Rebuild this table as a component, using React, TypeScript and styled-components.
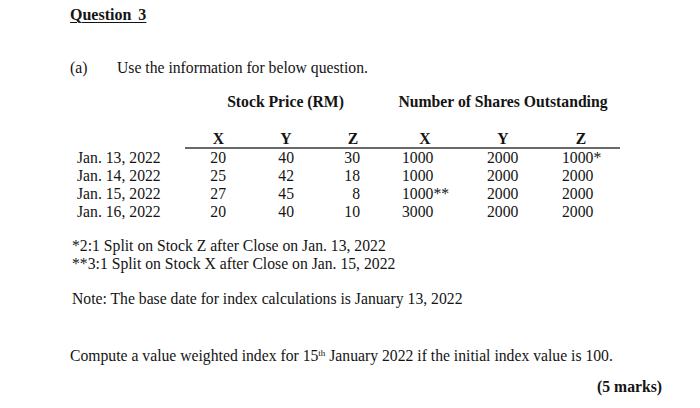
import styled, { createGlobalStyle } from 'styled-components';
import { Fragment } from 'react';

const GlobalStyle = createGlobalStyle`
    body {
        margin: 0;
        background: #ffffff;
    }
`;

const Page = styled.div`
    width: 700px;
    height: 408px;
    box-sizing: border-box;
    padding: 6px 10px 0 70px;
    font-family: 'Liberation Serif', 'Times New Roman', serif;
    font-size: 15.7px;
    color: #141414;
    background: #ffffff;
`;

const Title = styled.div`
    font-weight: bold;
    font-size: 16px;
    line-height: 18px;
    text-decoration: underline;
    text-underline-offset: 2px;
    word-spacing: 3px;
`;

const PartRow = styled.div`
    display: flex;
    margin-top: 34px;
    line-height: 20px;
`;

const PartLabel = styled.span`
    width: 47px;
`;

const Table = styled.div`
    display: grid;
    grid-template-columns: 108px 67px 68px 66px 78px 78px 78px;
    margin: 14px 0 0 7px;
    line-height: 18px;
`;

const GroupHead = styled.div<{ start: number }>`
    grid-column: ${({ start }) => start} / span 3;
    font-weight: bold;
    text-align: center;
    line-height: 20px;
    margin-bottom: 18px;
`;

const ColHead = styled.div<{ first?: boolean }>`
    font-weight: bold;
    text-align: center;
    line-height: 17px;
    border-bottom: ${({ first }) => (first ? '2px solid transparent' : '2px solid #6a6a6a')};
`;

const DateCell = styled.div``;

const PriceCell = styled.div`
    text-align: right;
    padding-right: 26px;
`;

const ShareCell = styled.div<{ pad: number }>`
    padding-left: ${({ pad }) => pad}px;
`;

const Notes = styled.div`
    margin-top: 16px;
    line-height: 18px;
    padding-left: 2px;
`;

const Note = styled.div`
    margin-top: 17px;
    line-height: 18px;
    padding-left: 2px;
`;

const Question = styled.div`
    margin-top: 39px;
    line-height: 18px;

    sup {
        font-size: 9px;
        line-height: 0;
        vertical-align: 5px;
    }
`;

const Marks = styled.div`
    margin-top: 13px;
    padding-right: 28px;
    line-height: 18px;
    font-weight: bold;
    text-align: right;
`;

const rows = [
    { date: 'Jan. 13, 2022', price: ['20', '40', '30'], shares: ['1000', '2000', '1000*'] },
    { date: 'Jan. 14, 2022', price: ['25', '42', '18'], shares: ['1000', '2000', '2000'] },
    { date: 'Jan. 15, 2022', price: ['27', '45', '8'], shares: ['1000**', '2000', '2000'] },
    { date: 'Jan. 16, 2022', price: ['20', '40', '10'], shares: ['3000', '2000', '2000'] },
];

const sharePads = [16, 23, 20];

const App = () => {
    return (
        <>
            <GlobalStyle />
            <Page>
                <Title>Question 3</Title>
                <PartRow>
                    <PartLabel>(a)</PartLabel>
                    <span>Use the information for below question.</span>
                </PartRow>
                <Table>
                    <div />
                    <GroupHead start={2}>Stock Price (RM)</GroupHead>
                    <GroupHead start={5}>Number of Shares Outstanding</GroupHead>
                    <ColHead first />
                    {['X', 'Y', 'Z', 'X', 'Y', 'Z'].map((h, i) => (
                        <ColHead key={i}>{h}</ColHead>
                    ))}
                    {rows.map((r) => (
                        <Fragment key={r.date}>
                            <DateCell>{r.date}</DateCell>
                            {r.price.map((p, i) => (
                                <PriceCell key={'p' + i}>{p}</PriceCell>
                            ))}
                            {r.shares.map((s, i) => (
                                <ShareCell key={'s' + i} pad={sharePads[i]}>
                                    {s}
                                </ShareCell>
                            ))}
                        </Fragment>
                    ))}
                </Table>
                <Notes>
                    <div>*2:1 Split on Stock Z after Close on Jan. 13, 2022</div>
                    <div>**3:1 Split on Stock X after Close on Jan. 15, 2022</div>
                </Notes>
                <Note>Note: The base date for index calculations is January 13, 2022</Note>
                <Question>
                    Compute a value weighted index for 15<sup>th</sup> January 2022 if the initial
                    index value is 100.
                </Question>
                <Marks>(5 marks)</Marks>
            </Page>
        </>
    );
};

export default App;
